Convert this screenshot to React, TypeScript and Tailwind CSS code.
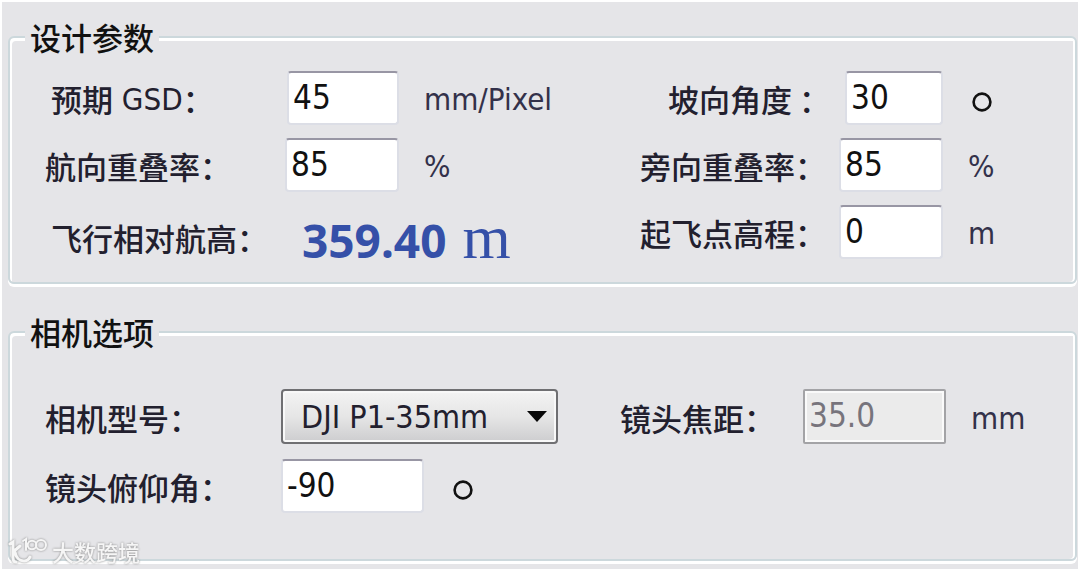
import type { ReactNode } from "react";

const cjk = "font-['Noto_Sans_CJK_SC',sans-serif]";
const latin = "font-['DejaVu_Sans_Condensed','Noto_Sans_CJK_SC',sans-serif]";

function Group({ title, className, children }: { title: string; className: string; children: ReactNode }) {
  return (
    <fieldset className="min-w-0 rounded-md border-2 border-[#ccd8dc] pl-[15px] shadow-[inset_2px_3px_0_#fff,inset_-2px_0_0_#fff,0_3px_0_#fff]">
      <legend className={`${cjk} bg-[#e5e5e8] px-[5px] text-[31px] leading-8 font-medium text-[#111]`}>{title}</legend>
      <div className={`grid pl-5 ${className}`}>{children}</div>
    </fieldset>
  );
}

function Label({ htmlFor, className = "pt-0.5", children }: { htmlFor: string; className?: string; children: ReactNode }) {
  return (
    <label htmlFor={htmlFor} className={`${cjk} flex items-center whitespace-pre text-[31px] leading-8 font-medium text-[#22202e] ${className}`}>
      {children}
    </label>
  );
}

function Value({ id, value, className }: { id: string; value: string; className: string }) {
  return (
    <input
      id={id}
      type="text"
      defaultValue={value}
      className={`${latin} h-[54px] rounded-[4px] border-2 border-[#dcdee6] border-t-[#9896a4] bg-white pb-0.5 text-[33px] leading-10 text-[#111] outline-none ${className}`}
    />
  );
}

function Unit({ children }: { children: ReactNode }) {
  return <span className={`${latin} pt-0.5 text-[31px] leading-8 text-[#33314a]`}>{children}</span>;
}

function Degree() {
  return (
    <svg viewBox="0 0 20 20" className="mt-2 ml-1 size-5" role="img" aria-label="度">
      <circle cx="10" cy="10" r="8.4" fill="none" stroke="#111" strokeWidth="2.6" />
    </svg>
  );
}

export default function App() {
  return (
    <main className="min-h-screen border-2 border-white bg-[#e5e5e8]">
      <form className="relative flex flex-col gap-8 px-1.5 pt-[19px] pr-px pb-2">
        <Group title="设计参数" className="grid-cols-[240fr_355fr_199fr_236fr] gap-y-[13px] pt-[18px] pb-[23px]">
          <Label htmlFor="gsd" className="pt-0.5 pl-1.5">
            预期<span className={`${latin} font-normal`}> GSD</span>：
          </Label>
          <div className="flex items-center gap-[25px]">
            <Value id="gsd" value="45" className="ml-0.5 w-28 pl-1" />
            <Unit>mm/Pixel</Unit>
          </div>
          <Label htmlFor="slope" className="pt-0.5 pl-7">坡向角度 ：</Label>
          <div className="flex items-center gap-[25px]">
            <Value id="slope" value="30" className="ml-1.5 w-[98px] pl-1" />
            <Degree />
          </div>

          <Label htmlFor="forward">航向重叠率：</Label>
          <div className="flex items-center gap-[25px]">
            <Value id="forward" value="85" className="w-[114px] pl-1" />
            <Unit>%</Unit>
          </div>
          <Label htmlFor="side">旁向重叠率：</Label>
          <div className="flex items-center gap-[25px]">
            <Value id="side" value="85" className="w-[104px] pl-1" />
            <Unit>%</Unit>
          </div>

          <Label htmlFor="height" className="pt-3 pl-1.5">飞行相对航高：</Label>
          <output id="height" className="flex h-[54px] items-baseline gap-4 pl-[17px] text-[#3550a8]">
            <span className="font-['Noto_Sans',sans-serif] text-[46px] leading-[70px] font-bold">359.40</span>
            <span className="font-['Liberation_Serif',serif] text-[62px] leading-[54px]">m</span>
          </output>
          <Label htmlFor="takeoff">起飞点高程：</Label>
          <div className="flex items-center gap-[25px]">
            <Value id="takeoff" value="0" className="w-[104px] pl-1" />
            <Unit>m</Unit>
          </div>
        </Group>

        <Group title="相机选项" className="grid-cols-[236fr_339fr_183fr_272fr] gap-y-[15px] pt-[41px] pb-[46px]">
          <Label htmlFor="camera">相机型号：</Label>
          <div className="grid w-[277px]">
            <select
              id="camera"
              className={`${latin} col-start-1 row-start-1 h-[55px] appearance-none rounded-[4px] border-2 border-[#6f6f72] bg-linear-to-b from-[#f3f3f3] from-0% via-[#e6e6e6] via-50% to-[#cdcdcf] to-100% pl-[18px] text-[32px] leading-10 text-[#22202e] shadow-[inset_0_0_0_2px_#f8f8f8] outline-none`}
            >
              <option>DJI P1-35mm</option>
            </select>
            <svg viewBox="0 0 20 11" className="pointer-events-none z-10 col-start-1 row-start-1 mr-[11px] h-[11px] w-5 self-center justify-self-end" aria-hidden="true">
              <path d="M0 0H20L10 11Z" fill="#080808" />
            </svg>
          </div>
          <Label htmlFor="focal">镜头焦距：</Label>
          <div className="flex items-center gap-[25px]">
            <input
              id="focal"
              type="text"
              defaultValue="35.0"
              disabled
              className={`${latin} h-[55px] w-[143px] rounded-[2px] border-2 border-[#a3a3a6] bg-[#ebebeb] pb-0.5 pl-1 text-[33px] leading-10 text-[#77747c] shadow-[inset_0_0_0_2px_#fafafa]`}
            />
            <Unit>mm</Unit>
          </div>

          <Label htmlFor="pitch">镜头俯仰角：</Label>
          <div className="flex items-center gap-[25px]">
            <Value id="pitch" value="-90" className="w-[143px] pl-1" />
            <Degree />
          </div>
        </Group>

        <div className="absolute bottom-1 left-1.5 flex items-center gap-1 text-[#f6f6f6] drop-shadow-[0_0_1px_#888]">
          <svg viewBox="0 0 40 28" className="h-7 w-10" fill="none" stroke="currentColor" strokeLinecap="round" aria-hidden="true">
            <path d="M2 7L5 5V21Q5 25 8 25M12 9L5 15M7 15C8 21 12 24 16 24C19 24 21 22 22 20" strokeWidth="3" />
            <path d="M15 4L18 2V13" strokeWidth="2" />
            <circle cx="24" cy="8" r="4.3" strokeWidth="2" />
            <circle cx="33" cy="8" r="5" strokeWidth="2" />
          </svg>
          <span className={`${cjk} text-[22px] leading-6 font-medium`}>大数跨境</span>
        </div>
      </form>
    </main>
  );
}
